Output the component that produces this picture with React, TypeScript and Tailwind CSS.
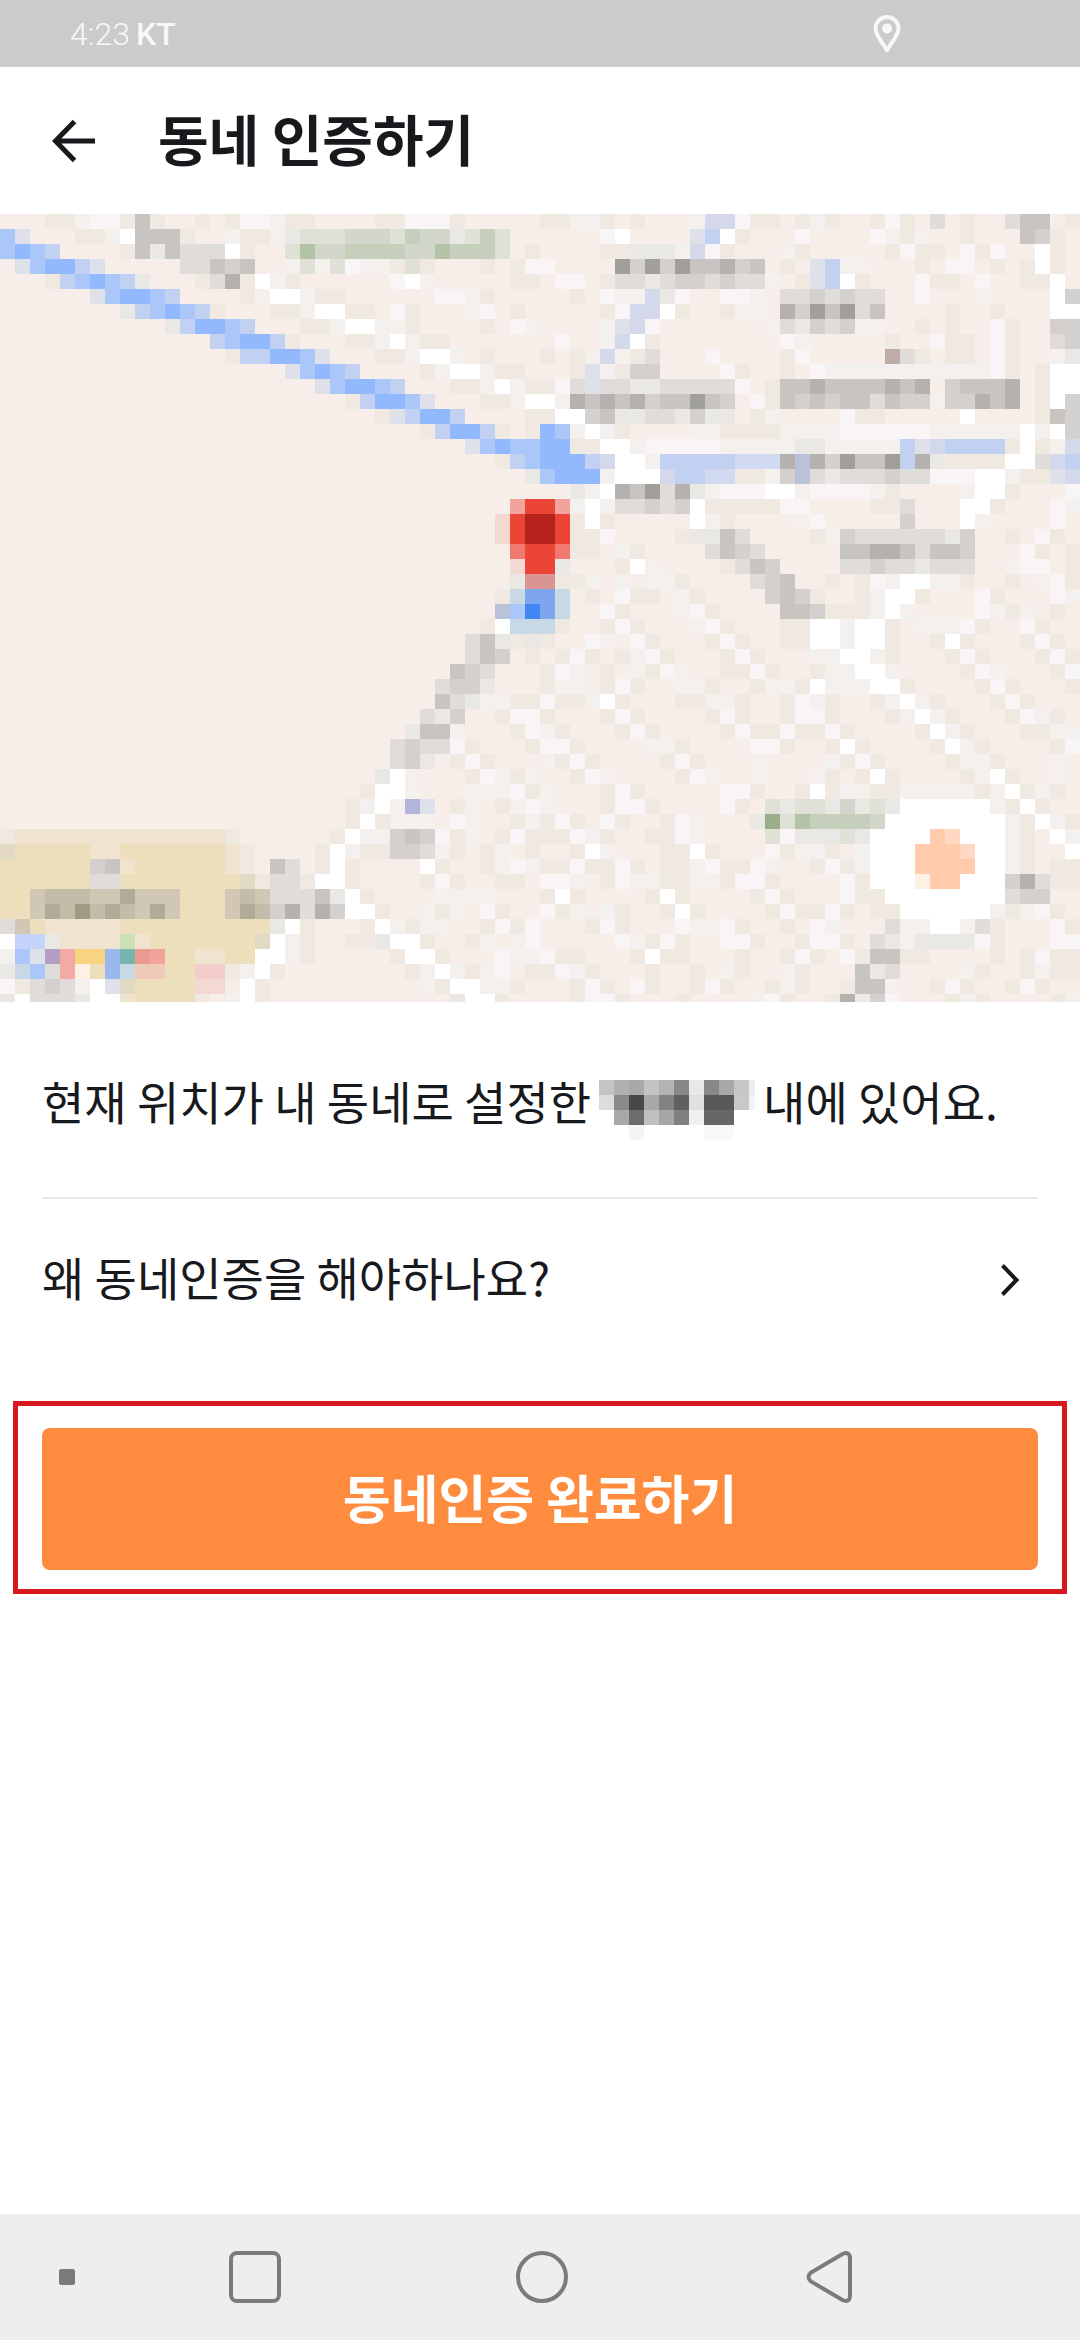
import React from 'react';

const COLORS: Record<string, string> = {
    ',': '#f0e9e2',
    '-': '#f3f0ee',
    p: '#f9f5f7',
    w: '#ffffff',
    e: '#e9e8e5',
    '1': '#dfdcd9',
    '2': '#d3d0cd',
    '3': '#c7c4c1',
    '4': '#b4b1ae',
    '5': '#a19f9a',
    '6': '#c0aca6',
    a: '#dfe1ea',
    b: '#c2d1f1',
    c: '#abc6f8',
    d: '#92b9fd',
    f: '#d3d9ea',
    x: '#d2daf2',
    n: '#b8c3da',
    k: '#c8d9e6',
    m: '#7da6ee',
    g: '#dfe0d6',
    G: '#d3d6ca',
    h: '#c6cfbb',
    i: '#b4c2a8',
    j: '#9bae8b',
    R: '#ea4536',
    S: '#b5231c',
    T: '#f2a39c',
    t: '#f07a70',
    U: '#f4d9d2',
    V: '#da9494',
    B: '#4285f4',
    P: '#b3b4db',
    y: '#eedfbc',
    z: '#f0e3cf',
    Z: '#e3dac6',
    K: '#d0c8b4',
    L: '#c3bca9',
    M: '#b1aa97',
    N: '#a09984',
    C: '#c5d4fb',
    l: '#cbdfb8',
    q: '#b59dc3',
    s: '#f3a9a4',
    Y: '#f8d382',
    D: '#9ab8ee',
    E: '#77b5ad',
    F: '#ec9a90',
    X: '#efcab8',
    u: '#f3cdcb',
    o: '#ffcbab',
    O: '#ffd9c3',
    v: '#fdf1e4',
};

// one character per tile, [west half, east half]
const TILES: [string, string][] = [
    ['...,,-pp,3,..,.,pp-,,....,,ppp,.....', ',,--,.,...-ffp,,.,-,..,p,.1.,..133.,'],
    ['ca...,,-w333,..-,,-egggGGGghGGeghg..', '....pw....abw,...p....p-,-..,...32,.'],
    ['cdcb....,3e3111w,..giGGhhhhGGihhhg.,', '....,,eee-fp,...-,.....,p,,.p,p..w,.'],
    ['.acddba.....11323..-g-gp--,g,...,.,p', 'p....5252533423.,.ab--...,.pp.,.,w,.'],
    ['...,bcdcbe...,14,w-,......pw-.....,,', '.pp.,11e1221211-.,abw,...p,,.p..,,w.'],
    ['......acddcb....,-ww-,,......pp-,...', '..,.p--fep..pp-.1121211..p...-....w2'],
    ['........ebcdcb,...,,-ww,,.p,...-p.,.', '....,pffw,..,--.4253513....,..,...ww'],
    ['...........ebddcb...,,-ww--,....,.p-', '....-afp.......-1e212--..,.,..p,..22'],
    ['..............bcddb,...,,-w-,,......', '.p..-fw,........p-.....,..p,,.p,..12'],
    ['...............,bbddca...,,-ww-.,...', ',.,-f-,1...p....,p.....61,.,,.p,..-e'],
    ['acdcb....,-ww-,,.', '..,a-,22....p,..,.p-----------p,.,ww'],
    ['acddcb...,,-w-,', ',p1a11ee11111p.,3343333434.23334.,ww'],
    [',bddca...,,-w', 'w-43434233532.p,3232331322-22434.,w2'],
    [',abddb....,', ',ww23ee11e2ee.,-....p,,.....w....,32'],
    [',bddb,.,', 'dc-w-,....--,,,,----pppppp------w-w2'],
    ['acdcc', 'dd,,ww-ppppp-----ee-----bafbbbb,w,-f'],
    [',bc', 'dddbfww-bbbbbxxx4n425335b4e,,,,ww1fb'],
    ['e', 'cddd-wwwfbbxx,,-2n1e111211pppww-,,af'],
    ['', '..e-w43514e-pppww-pppp-,....-ww,...p'],
    ['TR', 'RT-w-11212w,,,,,pp....,,1...ww,...p-'],
    ['URS', 'SR,w,.....w-,....-p.....2...w-....p.'],
    ['URS', 'SR,,p....,ee31....,-2111111e2..,.p,.'],
    ['tR', 'Rt,,.-,....1321.....334431332...p,.,'],
    ['UR', 'Re...,w-....,132....11211e111..-pp.,'],
    ['eV', 'V,,-.-.--,....123..,.,p-ww--,..,.-p,'],
    [',km', 'mk.,.p,,.-,....232,..,-ww,...p,...p-'],
    ['ncB', 'mk..p,...-p,....332,,,-w-....p-,-.,.'],
    [',wkk', 'k,..,p,...-p,...,,ww-ww,.---p,..p,..'],
    ['13e,e', ',..p-.p,...,p,..,,ww-ww,..,w,...,p,.'],
    ['132.,', '.,p,.,-p,...,p,...--ww-,...,p,...,p,'],
    ['321...', ',p-.,.-,p-..,,p,..,--ww-....,p-...,p'],
    ['122e...', ',--.,p,..--,..,--,w---ww,....,p,...,'],
    ['31e--,,', 'p,,-w,...,,--,..,p-,..,-w-,...,p,...'],
    ['1e2..,pp', ',...,p,....,p,..,pp,...,-w-,...,p-,.'],
    ['e33-...,p', '-,...,p,....,p,,p,,p,....,w-,...,,--'],
    ['1211p,...,', 'pp,....--,....pp,..,w,....,w-,....,p'],
    ['12e.,p,...', '-,p,....,p,...-....-,p,....,--,...-.'],
    ['ew-...,p-,-', '..,p-....,p-..-...-,.,w,....,-w,..-.'],
    [',ww-...---p,', '-...,p,.....pp,..,w,--,,-----,-w,-,.'],
    [',-w-Pa.,-.,-p', '-...,pp,....p,.geggeGegewwwwww-,w,..'],
    [',w,---.p-..,-', ',p,.p,..,p-...ejgihhhhGwwwwwwww-,w-,'],
    [',zzzzzzzzzzzzzz,......,w--232p,-.,p,', ',,p-,..,,p-....gpeeegewwwwoOwww-,.w-'],
    ['Zyyyyyzzyyyyyyyz,....,w-,,221-,.,-.,', '..,w-...,,w,...p,--,.-wwwoooOww-,..w'],
    ['yyyyyy23zyyyyyyz,.31.,w,....w,..,-p-', ',,p,,p,.,,-p,,p-..,p,-wwwooooww-,.,,'],
    ['yyyyyy11yyyyyyyyZ,11,ww,....,p,..,,.', 'pp-.,p--,,--,pp,....p,wwwvoowww241,,'],
    ['yyKLLLKKMKKKyyyKLK1113ew,....----...', ',w,....,w,....,p,...p,,wwwwwwww122..'],
    ['yyKMLNLMLKMKyyyKML24142ww,..-,-.p,..', 'p,-.-,..,w,....,p,,p,.,,wwwwww-,-p,.'],
    ['1Kyzzzzzyyyyyyyyyyew,...,w-,--..,p,p', '...,p,...p--p,..,.p-...1--ww-1,...p,'],
    ['wCCezzzzlzyyyyyyyZw-,..,,eww,..,-.-p', '.....p-,p,..pp,..,pp,.1e-eeeep,...pp'],
    ['-caqsYYDEFTyyzzyyww-,.....,ww,...p--', 'p,,...,w,,...,..,p,.p,33,,....,.,p,,'],
    ['ekc1svyDkXXyyuu,-w,........,-w-,-p.,', ',p-,...,..,.-,..-,...3e1....-,..,-,,'],
    ['p,121-waZyyyyUU.w,..........-,ww--,.', '..,p,.p,..,p,..,-,..,33-..,p,..,p,..'],
    ['ew111ewwzyyyy,.-w,............eww,..', '..,pp,...,....-p,..,4,2p...,-,....,-'],
];

const NAME_TILES = [
    ['#c4c4c4', '#b0b0b0', '#a9a9a9', '#c3c3c3', '#b4b4b4', '#888888', '#e8e8e8', '#888888', '#a8a8a8', '#c6c6c6', '#ececec'],
    ['#dcdcdc', '#8a8a8a', '#484848', '#a8a8a8', '#828282', '#606060', '#e0e0e0', '#585858', '#585858', '#c9c9c9', '#f3f3f3'],
    ['#ffffff', '#a8a8a8', '#6c6c6c', '#c0c0c0', '#a6a6a6', '#808080', '#f0f0f0', '#666666', '#666666', '#ffffff', '#ffffff'],
    ['#ffffff', '#ffffff', '#f5f5f5', '#ffffff', '#ffffff', '#ffffff', '#ffffff', '#f9f9f9', '#f9f9f9', '#ffffff', '#ffffff'],
];

function NeighborhoodMap() {
    return (
        <svg viewBox="0 0 1080 788" className="block w-full bg-[#f8eee9]" shapeRendering="crispEdges" role="img" aria-label="지도">
            {TILES.map(([west, east], row) =>
                (west.padStart(36, '.') + east).split('').map((tile, col) =>
                    COLORS[tile] ? (
                        <rect key={`${row}-${col}`} x={col * 15} y={row * 15} width={15} height={15} fill={COLORS[tile]} />
                    ) : null
                )
            )}
        </svg>
    );
}

function HiddenName() {
    return (
        <svg viewBox="0 0 156 60" className="w-[156px] h-[60px] shrink-0 mx-2 mt-5" shapeRendering="crispEdges" aria-hidden="true">
            {NAME_TILES.map((line, row) =>
                line.map((color, col) => (
                    <rect key={`${row}-${col}`} x={col * 15} y={row * 15} width={15} height={15} fill={color} />
                ))
            )}
        </svg>
    );
}

export default function App() {
    return (
        <div className="flex flex-col min-h-screen bg-white text-[#17191d] font-['Noto_Sans_CJK_KR',sans-serif]">

            {/* Status bar */}
            <div className="flex items-center justify-between h-[67px] pl-[70px] pr-[178px] bg-[#cbcbcb] text-[#f8f8f8] text-[32px] leading-8 font-[Roboto,sans-serif]">
                <div className="flex gap-[6px]">
                    <span className="font-light">4:23</span>
                    <span className="font-medium">KT</span>
                </div>
                <svg viewBox="0 0 30 40" className="w-[30px] h-10" fill="none">
                    <path d="M15 36.500C12 30 3.500 22 3.500 14.500a11.500 11.500 0 0 1 23 0C26.500 22 18 30 15 36.500Z" stroke="currentColor" strokeWidth="4" strokeLinejoin="round" />
                    <circle cx="15" cy="14.500" r="5" fill="currentColor" />
                </svg>
            </div>

            {/* Header */}
            <header className="flex items-center h-[147px] pl-[50px] gap-[60px]">
                <button type="button" aria-label="뒤로">
                    <svg viewBox="0 0 48 48" className="w-12 h-12" fill="none" stroke="currentColor" strokeWidth="5">
                        <path d="M45 24H6M24.500 4.500L5.500 24l19 19.500" />
                    </svg>
                </button>
                <h1 className="pb-2 text-[55px] leading-[80px] font-bold">동네 인증하기</h1>
            </header>

            <NeighborhoodMap />

            <main className="flex-1">
                <div className="mx-[42px]">
                    <p className="flex items-center h-[197px] text-[46px] leading-[68px] border-b-2 border-[#e9e9e9] whitespace-nowrap">
                        <span>현재 위치가 내 동네로 설정한</span>
                        <HiddenName />
                        <span>내에 있어요.</span>
                    </p>
                    <button type="button" className="flex items-center justify-between w-full h-[162px] pr-[18px] text-[46px] leading-[68px]">
                        <span className="pb-2">왜 동네인증을 해야하나요?</span>
                        <svg viewBox="0 0 20 34" className="w-5 h-[34px]" fill="none" stroke="currentColor" strokeWidth="4">
                            <path d="M2.500 2.500L16.500 17l-14 14.500" />
                        </svg>
                    </button>
                </div>

                {/* Action Button */}
                <div className="mx-[13px] mt-10 px-6 pt-[22px] pb-[19px] border-[5px] border-[#d7191f]">
                    <button type="button" className="block w-full h-[142px] pb-1 rounded-lg bg-[#ff8c3e] text-white text-[52px] leading-[76px] font-bold">
                        동네인증 완료하기
                    </button>
                </div>
            </main>

            {/* Navigation bar */}
            <nav className="grid grid-cols-[111px_1fr_1fr_1fr_108px] items-center h-[126px] bg-[#eeeeee] text-[#7b7b7b]">
                <span className="w-4 h-4 ml-[59px] rounded-xs bg-[#7b7b7b]" />
                <button type="button" aria-label="최근 앱" className="flex justify-center">
                    <span className="w-[52px] h-[52px] border-4 border-[#7b7b7b] rounded-lg" />
                </button>
                <button type="button" aria-label="홈" className="flex justify-center">
                    <span className="w-[52px] h-[52px] border-4 border-[#7b7b7b] rounded-full" />
                </button>
                <button type="button" aria-label="뒤로 가기" className="flex justify-center">
                    <svg viewBox="0 0 48 54" className="w-12 h-[54px]" fill="none" stroke="currentColor" strokeWidth="4">
                        <path d="M37.500 4L6 22.500q-5 4.500 0 9L37.500 50q7 3 7.500-4V8q-.5-7-7.500-4Z" />
                    </svg>
                </button>
            </nav>
        </div>
    );
}
